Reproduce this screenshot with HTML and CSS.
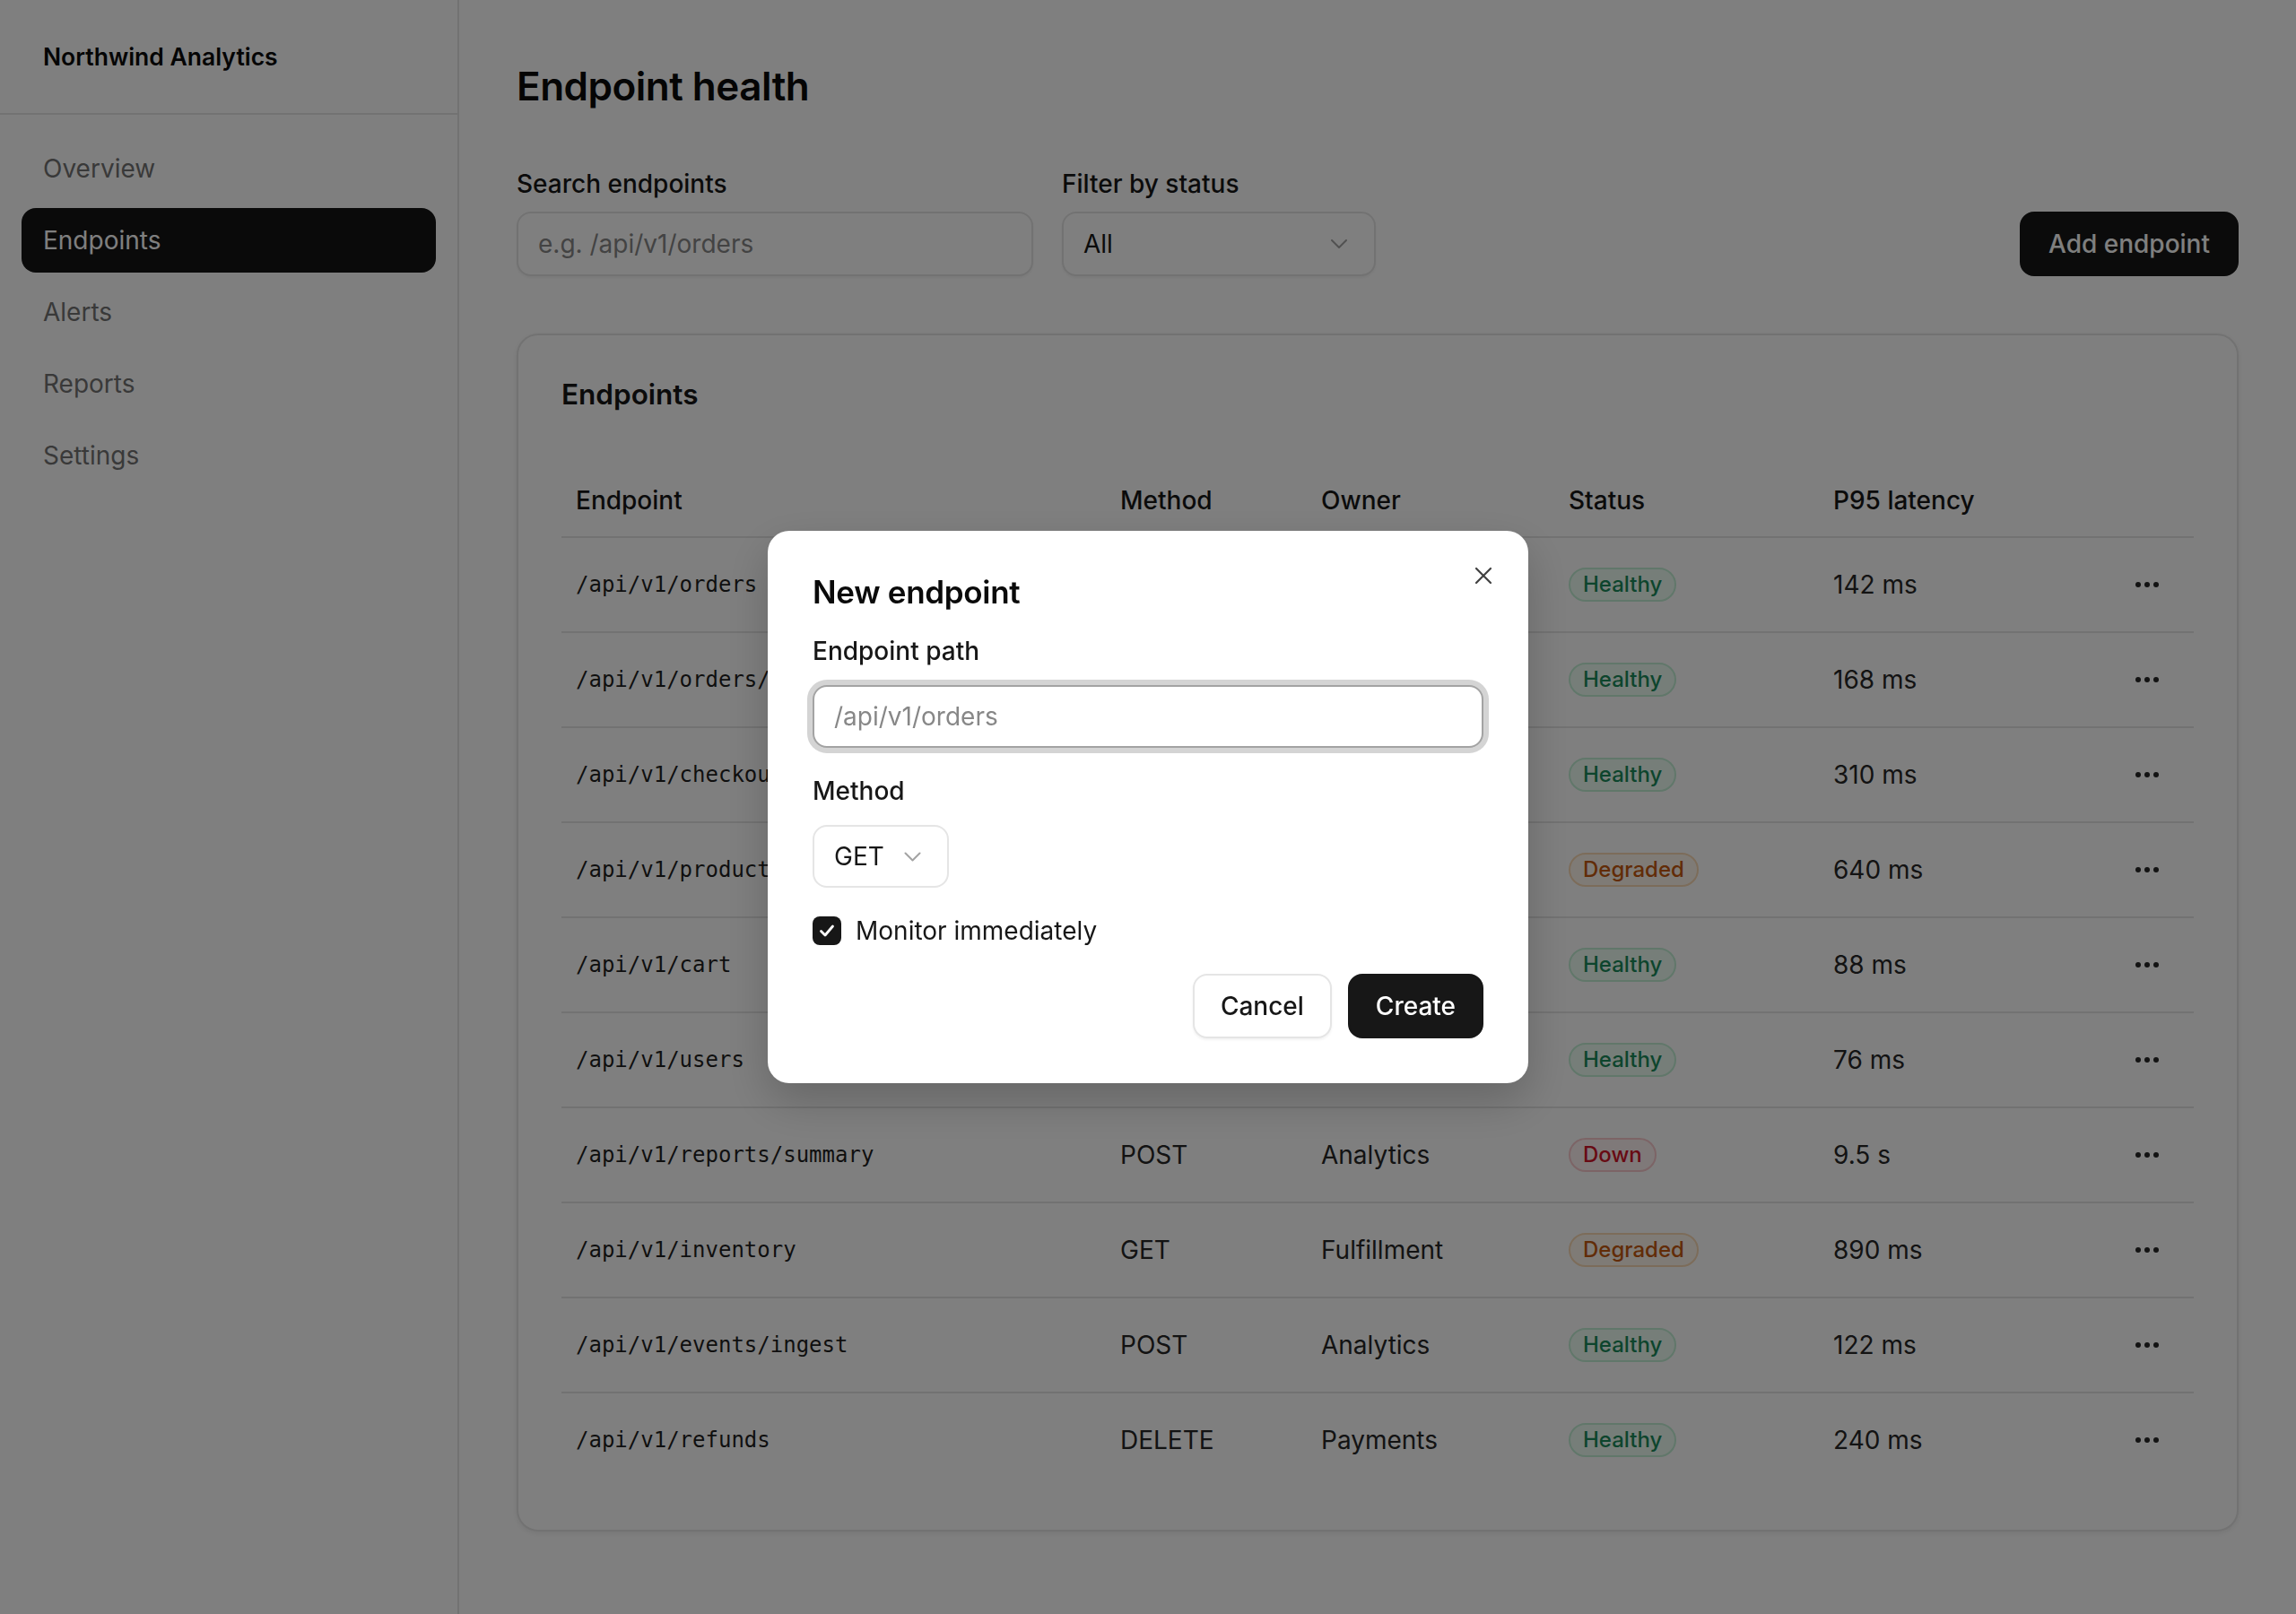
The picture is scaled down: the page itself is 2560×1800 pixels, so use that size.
FILE: index.html
```html
<!DOCTYPE html>
<html lang="en">
<head>
    <meta charset="UTF-8">
    <meta name="viewport" content="width=device-width, initial-scale=1.0">
    <title>Endpoint health · Northwind Analytics</title>
    <link rel="stylesheet" href="styles.css">
</head>
<body>
    <div class="app">
        <aside class="sidebar">
            <div class="brand">Northwind Analytics</div>
            <nav class="nav">
                <a class="nav-item" href="#">Overview</a>
                <a class="nav-item active" href="#">Endpoints</a>
                <a class="nav-item" href="#">Alerts</a>
                <a class="nav-item" href="#">Reports</a>
                <a class="nav-item" href="#">Settings</a>
            </nav>
        </aside>

        <main class="main">
            <h1>Endpoint health</h1>

            <div class="toolbar">
                <div class="filters">
                    <div class="field search-field">
                        <label for="search">Search endpoints</label>
                        <input id="search" class="input" type="text" placeholder="e.g. /api/v1/orders">
                    </div>
                    <div class="field status-field">
                        <label>Filter by status</label>
                        <div class="select">
                            <span>All</span>
                            <svg class="chevron" width="18" height="10" viewBox="0 0 18 10"><path d="M1 1l8 8 8-8" fill="none" stroke="#a3a3a3" stroke-width="2" stroke-linecap="round" stroke-linejoin="round"/></svg>
                        </div>
                    </div>
                </div>
                <button class="btn btn-primary">Add endpoint</button>
            </div>

            <section class="card">
                <h2>Endpoints</h2>
                <table class="endpoints">
                    <colgroup>
                        <col style="width: 607px">
                        <col style="width: 224px">
                        <col style="width: 276px">
                        <col style="width: 295px">
                        <col style="width: 314px">
                        <col style="width: 104px">
                    </colgroup>
                    <thead>
                        <tr>
                            <th>Endpoint</th>
                            <th>Method</th>
                            <th>Owner</th>
                            <th>Status</th>
                            <th>P95 latency</th>
                            <th></th>
                        </tr>
                    </thead>
                    <tbody id="rows"></tbody>
                </table>
            </section>
        </main>
    </div>

    <div class="backdrop">
        <div class="modal" role="dialog" aria-labelledby="modal-title">
            <button class="close" aria-label="Close">
                <svg width="20" height="20" viewBox="0 0 20 20"><path d="M2 2l16 16M18 2L2 18" stroke="#404040" stroke-width="2.2" stroke-linecap="round"/></svg>
            </button>
            <h3 id="modal-title">New endpoint</h3>
            <div class="field">
                <label for="path">Endpoint path</label>
                <input id="path" class="input input-focus" type="text" placeholder="/api/v1/orders">
            </div>
            <div class="field">
                <label>Method</label>
                <div class="select select-small">
                    <span>GET</span>
                    <svg class="chevron" width="19" height="11" viewBox="0 0 19 11"><path d="M1.5 1.5l8 8 8-8" fill="none" stroke="#a3a3a3" stroke-width="2" stroke-linecap="round" stroke-linejoin="round"/></svg>
                </div>
            </div>
            <label class="check-row">
                <span class="checkbox">
                    <svg width="22" height="22" viewBox="0 0 22 22"><path d="M4.5 11.5l4.5 4.5 8.5-10" fill="none" stroke="#fff" stroke-width="2.8" stroke-linecap="round" stroke-linejoin="round"/></svg>
                </span>
                Monitor immediately
            </label>
            <div class="actions">
                <button class="btn btn-secondary">Cancel</button>
                <button class="btn btn-primary">Create</button>
            </div>
        </div>
    </div>

    <script>
    const endpoints = [
        ['/api/v1/orders', 'GET', 'Commerce', 'healthy', '142 ms'],
        ['/api/v1/orders/{id}', 'GET', 'Commerce', 'healthy', '168 ms'],
        ['/api/v1/checkout', 'POST', 'Payments', 'healthy', '310 ms'],
        ['/api/v1/products', 'GET', 'Catalog', 'degraded', '640 ms'],
        ['/api/v1/cart', 'PUT', 'Commerce', 'healthy', '88 ms'],
        ['/api/v1/users', 'GET', 'Identity', 'healthy', '76 ms'],
        ['/api/v1/reports/summary', 'POST', 'Analytics', 'down', '9.5 s'],
        ['/api/v1/inventory', 'GET', 'Fulfillment', 'degraded', '890 ms'],
        ['/api/v1/events/ingest', 'POST', 'Analytics', 'healthy', '122 ms'],
        ['/api/v1/refunds', 'DELETE', 'Payments', 'healthy', '240 ms']
    ];
    const labels = { healthy: 'Healthy', degraded: 'Degraded', down: 'Down' };
    const dots = '<svg width="26" height="6" viewBox="0 0 26 6"><circle cx="3" cy="3" r="3"/><circle cx="13" cy="3" r="3"/><circle cx="23" cy="3" r="3"/></svg>';

    document.getElementById('rows').innerHTML = endpoints.map(([path, method, owner, status, p95]) => `
        <tr>
            <td class="mono">${path}</td>
            <td>${method}</td>
            <td>${owner}</td>
            <td><span class="badge badge-${status}">${labels[status]}</span></td>
            <td>${p95}</td>
            <td class="row-actions"><button class="more" aria-label="More">${dots}</button></td>
        </tr>
    `).join('');
    </script>
</body>
</html>
```

FILE: styles.css
```css
* {
    box-sizing: border-box;
}
body {
    margin: 0;
    font-family: Inter, "Noto Sans", sans-serif;
    color: #171717;
    background: #fff;
}
.app {
    display: grid;
    grid-template-columns: 512px 1fr;
    min-height: 100vh;
}

/* Sidebar */
.sidebar {
    border-right: 2px solid #e5e5e5;
}
.brand {
    height: 128px;
    display: flex;
    align-items: center;
    padding-left: 48px;
    border-bottom: 2px solid #e5e5e5;
    font-size: 26.5px;
    font-weight: 600;
    color: #0a0a0a;
}
.nav {
    display: flex;
    flex-direction: column;
    gap: 8px;
    padding: 24px;
}
.nav-item {
    height: 72px;
    display: flex;
    align-items: center;
    padding: 0 24px;
    border-radius: 16px;
    font-size: 28px;
    color: #737373;
    text-decoration: none;
}
.nav-item.active {
    background: #141414;
    color: #fff;
}

/* Main column */
.main {
    padding: 64px;
}
h1 {
    margin: 0;
    font-size: 44px;
    line-height: 64px;
    font-weight: 600;
    color: #0a0a0a;
    letter-spacing: -0.5px;
}
.toolbar {
    display: flex;
    justify-content: space-between;
    align-items: flex-end;
    margin-top: 57px;
}
.filters {
    display: flex;
    gap: 32px;
}
.field label {
    display: block;
    font-size: 28px;
    line-height: 40px;
    font-weight: 500;
    color: #171717;
    margin-bottom: 11px;
}
.search-field .input {
    width: 576px;
}
.status-field .select {
    width: 350px;
}
.input {
    display: block;
    height: 72px;
    padding: 0 22px;
    border: 2px solid #e5e5e5;
    border-radius: 16px;
    background: #fff;
    font-family: inherit;
    font-size: 28px;
    color: #171717;
    box-shadow: 0 2px 3px rgba(0, 0, 0, 0.05);
    outline: none;
}
.input::placeholder {
    color: #878787;
}
.select {
    height: 72px;
    display: flex;
    align-items: center;
    justify-content: space-between;
    padding: 0 30px 0 22px;
    border: 2px solid #e5e5e5;
    border-radius: 16px;
    background: #fff;
    font-size: 28px;
    box-shadow: 0 2px 3px rgba(0, 0, 0, 0.05);
}

/* Buttons */
.btn {
    height: 72px;
    padding: 0 29px;
    border: 2px solid transparent;
    border-radius: 16px;
    font-family: inherit;
    font-size: 28px;
    font-weight: 500;
    cursor: pointer;
}
.btn-primary {
    background: #171717;
    border-color: #171717;
    color: #fff;
}
.btn-secondary {
    background: #fff;
    border-color: #e5e5e5;
    color: #171717;
    box-shadow: 0 2px 3px rgba(0, 0, 0, 0.05);
}
.toolbar .btn {
    padding: 0 30px;
}

/* Endpoints card */
.card {
    margin-top: 64px;
    padding: 48px;
    border: 2px solid #e5e5e5;
    border-radius: 24px;
    background: #fff;
    box-shadow: 0 2px 6px rgba(0, 0, 0, 0.08);
}
.card h2 {
    margin: 0 0 60px;
    font-size: 31.5px;
    line-height: 36px;
    font-weight: 600;
}
.endpoints {
    width: 100%;
    border-collapse: separate;
    border-spacing: 0;
    table-layout: fixed;
}
.endpoints th {
    text-align: left;
    padding: 20px 16px;
    font-size: 28px;
    line-height: 40px;
    font-weight: 500;
    color: #171717;
    border-bottom: 2px solid #e5e5e5;
}
.endpoints td {
    padding: 32px 16px;
    height: 104px;
    font-size: 28px;
    line-height: 40px;
    color: #262626;
    white-space: nowrap;
    overflow: hidden;
    vertical-align: middle;
}
.endpoints tbody tr + tr td {
    height: 106px;
    border-top: 2px solid #e5e5e5;
}
.endpoints td.mono {
    font-family: "DejaVu Sans Mono", "Liberation Mono", monospace;
    font-size: 24px;
    color: #1f1f1f;
}
.endpoints td.row-actions {
    padding: 32px 0;
}
.more {
    display: flex;
    align-items: center;
    justify-content: center;
    width: 100%;
    height: 40px;
    border: none;
    background: none;
    padding: 0;
    fill: #262626;
}

/* Status badges */
.badge {
    display: inline-block;
    vertical-align: top;
    margin-top: 1px;
    padding: 0 14px;
    border: 2px solid;
    border-radius: 999px;
    font-size: 24px;
    line-height: 34px;
    font-weight: 500;
}
.badge-healthy {
    color: #1a8a5a;
    background: #ecfdf3;
    border-color: #c2efd5;
}
.badge-degraded {
    color: #c4580f;
    background: #fff7ed;
    border-color: #f9d9b4;
}
.badge-down {
    color: #d01428;
    background: #fef2f2;
    border-color: #f8c9cc;
}

/* Dialog */
.backdrop {
    position: fixed;
    inset: 0;
    background: rgba(0, 0, 0, 0.5);
    display: flex;
    align-items: center;
    justify-content: center;
}
.modal {
    position: relative;
    width: 848px;
    padding: 50px;
    border-radius: 24px;
    background: #fff;
    display: flex;
    flex-direction: column;
    gap: 28px;
    box-shadow: 0 20px 50px rgba(0, 0, 0, 0.2);
}
.modal h3 {
    margin: 0;
    font-size: 35px;
    line-height: 36px;
    font-weight: 600;
    color: #0a0a0a;
    letter-spacing: -0.3px;
}
.modal .field label {
    margin-bottom: 18px;
}
.modal .input {
    width: 100%;
    height: 70px;
    box-shadow: none;
}
.input-focus {
    border-color: #a3a3a3 !important;
    box-shadow: 0 0 0 6px #d4d4d4 !important;
}
.close {
    position: absolute;
    top: 32px;
    right: 32px;
    width: 36px;
    height: 36px;
    display: flex;
    align-items: center;
    justify-content: center;
    border: none;
    background: none;
    padding: 0;
}
.select-small {
    width: 152px;
    height: 70px;
    padding: 0 29px 0 22px;
    box-shadow: none;
}
.check-row {
    display: flex;
    align-items: center;
    gap: 16px;
    height: 40px;
    font-size: 28px;
    color: #171717;
}
.checkbox {
    width: 32px;
    height: 32px;
    border-radius: 8px;
    background: #171717;
    display: flex;
    align-items: center;
    justify-content: center;
}
.actions {
    display: flex;
    justify-content: flex-end;
    gap: 18px;
}
```
